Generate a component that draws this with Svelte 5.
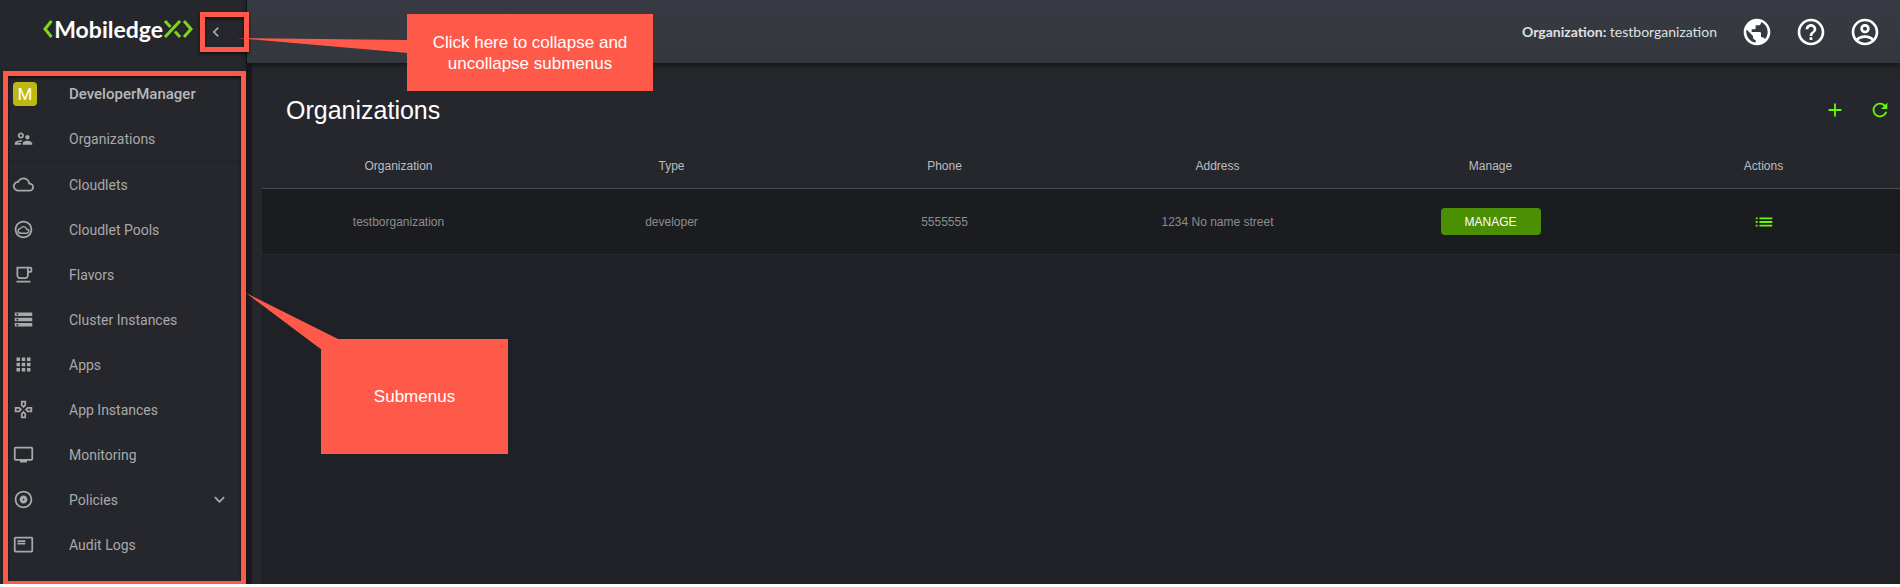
<script>
  const menu = [
    { label: 'Organizations', icon: 'people', divider: true },
    { label: 'Cloudlets', icon: 'cloud' },
    { label: 'Cloudlet Pools', icon: 'pool' },
    { label: 'Flavors', icon: 'cup' },
    { label: 'Cluster Instances', icon: 'storage' },
    { label: 'Apps', icon: 'apps' },
    { label: 'App Instances', icon: 'games' },
    { label: 'Monitoring', icon: 'monitor' },
    { label: 'Policies', icon: 'disc', expandable: true },
    { label: 'Audit Logs', icon: 'logs' }
  ];

  const icons = {
    people:
      'M9 12c1.930 0 3.500-1.570 3.500-3.500S10.930 5 9 5 5.500 6.570 5.500 8.500 7.070 12 9 12zm0-5c.830 0 1.500.670 1.500 1.500S9.830 10 9 10s-1.500-.670-1.500-1.500S8.170 7 9 7zm.050 10H4.770c.990-.500 2.700-1 4.230-1 .110 0 .230.010.340.010.340-.730.930-1.330 1.640-1.810-.730-.130-1.420-.200-1.980-.200-2.340 0-7 1.170-7 3.500V19h7v-1.500c0-.170.020-.340.050-.500zm7.450-2.500c-1.840 0-5.500 1.010-5.500 3V19h11v-1.500c0-1.990-3.660-3-5.500-3zm1.210-1.820c.760-.430 1.290-1.240 1.290-2.180C19 9.120 17.880 8 16.500 8S14 9.120 14 10.500c0 .940.530 1.750 1.290 2.180.360.200.770.320 1.210.320s.850-.120 1.210-.320z',
    cloud:
      'M19.350 10.040C18.670 6.590 15.640 4 12 4 9.110 4 6.600 5.640 5.350 8.040 2.340 8.360 0 10.910 0 14c0 3.310 2.690 6 6 6h13c2.760 0 5-2.240 5-5 0-2.640-2.050-4.780-4.650-4.960zM19 18H6c-2.210 0-4-1.790-4-4 0-2.050 1.530-3.760 3.560-3.970l1.070-.110.500-.950C8.080 7.140 9.940 6 12 6c2.620 0 4.880 1.860 5.390 4.430l.300 1.500 1.530.110c1.560.100 2.780 1.410 2.780 2.960 0 1.650-1.350 3-3 3z',
    pool:
      'M12 2C6.480 2 2 6.480 2 12s4.480 10 10 10 10-4.480 10-10S17.520 2 12 2zm0 18c-4.410 0-8-3.590-8-8s3.590-8 8-8 8 3.590 8 8-3.590 8-8 8zm3.920-9.010C15.460 9.250 13.880 8 12 8c-1.510 0-2.840.850-3.500 2.140C6.540 10.350 5 11.990 5 14c0 2.140 1.790 3 3.500 3h7.250C17.540 17 19 15.540 19 13.750c0-1.590-1.310-2.760-3.080-2.760zM15.750 15.500H9c-1.210 0-2.250-.860-2.250-2s.900-2 2-2h.540c.210-1.240 1.300-2.060 2.710-2.060 1.520 0 2.680 1.060 2.750 2.560v.500h1c.820 0 1.500.680 1.500 1.500 0 .500-.670 1.500-1.500 1.500z',
    cup:
      'M16 5v8c0 1.100-.900 2-2 2H8c-1.100 0-2-.900-2-2V5h10m4-2H4v10c0 2.210 1.790 4 4 4h6c2.210 0 4-1.790 4-4v-3h2c1.110 0 2-.890 2-2V5c0-1.110-.890-2-2-2zm-2 5V5h2v3h-2zm2 11H4v2h16v-2z',
    storage:
      'M2 20h20v-4H2v4zm2-3h2v2H4v-2zM2 4v4h20V4H2zm4 3H4V5h2v2zm-4 7h20v-4H2v4zm2-3h2v2H4v-2z',
    apps:
      'M4 8h4V4H4v4zm6 12h4v-4h-4v4zm-6 0h4v-4H4v4zm0-6h4v-4H4v4zm6 0h4v-4h-4v4zm6-10v4h4V4h-4zm-6 4h4V4h-4v4zm6 6h4v-4h-4v4zm0 6h4v-4h-4v4z',
    games:
      'M13 4v2.670l-1 1-1-1V4h2m7 7v2h-2.670l-1-1 1-1H20M6.670 11l1 1-1 1H4v-2h2.670M12 16.330l1 1V20h-2v-2.670l1-1M15 2H9v5.500l3 3 3-3V2zm7 7h-5.500l-3 3 3 3H22V9zM7.500 9H2v6h5.500l3-3-3-3zm4.500 4.500l-3 3V22h6v-5.500l-3-3z',
    monitor:
      'M21 3H3c-1.100 0-2 .900-2 2v12c0 1.100.900 2 2 2h5v2h8v-2h5c1.100 0 1.990-.900 1.990-2L23 5c0-1.100-.900-2-2-2zm0 14H3V5h18v12z',
    disc:
      'M12 2C6.480 2 2 6.480 2 12s4.480 10 10 10 10-4.480 10-10S17.520 2 12 2zm0 18c-4.410 0-8-3.590-8-8s3.590-8 8-8 8 3.590 8 8-3.590 8-8 8zm0-12.500c-2.490 0-4.500 2.010-4.500 4.500s2.010 4.500 4.500 4.500 4.500-2.010 4.500-4.500-2.010-4.500-4.500-4.500zm0 5.500c-.550 0-1-.450-1-1s.450-1 1-1 1 .450 1 1-.450 1-1 1z',
    logs:
      'M21 3H3c-1.100 0-2 .900-2 2v14c0 1.100.900 2 2 2h18c1.100 0 2-.900 2-2V5c0-1.100-.900-2-2-2zm0 16H3V5h18v14zM5 10h9v2H5v-2zm0-3h9v2H5V7z',
    left: 'M15.410 7.410L14 6l-6 6 6 6 1.410-1.410L10.830 12z',
    down: 'M16.590 8.590L12 13.170 7.410 8.590 6 10l6 6 6-6z',
    globe:
      'M12 2C6.480 2 2 6.480 2 12s4.480 10 10 10 10-4.480 10-10S17.520 2 12 2zm-1 17.930c-3.950-.490-7-3.850-7-7.930 0-.620.080-1.210.210-1.790L9 15v1c0 1.100.900 2 2 2v1.930zm6.900-2.540c-.260-.810-1-1.390-1.900-1.390h-1v-3c0-.550-.450-1-1-1H8v-2h2c.550 0 1-.450 1-1V7h2c1.100 0 2-.900 2-2v-.410c2.930 1.190 5 4.060 5 7.410 0 2.080-.800 3.970-2.100 5.390z',
    help:
      'M11 18h2v-2h-2v2zm1-16C6.480 2 2 6.480 2 12s4.480 10 10 10 10-4.480 10-10S17.520 2 12 2zm0 18c-4.410 0-8-3.590-8-8s3.590-8 8-8 8 3.590 8 8-3.590 8-8 8zm0-14c-2.210 0-4 1.790-4 4h2c0-1.100.900-2 2-2s2 .900 2 2c0 2-3 1.750-3 5h2c0-2.250 3-2.500 3-5 0-2.210-1.790-4-4-4z',
    account:
      'M12 2C6.480 2 2 6.480 2 12s4.480 10 10 10 10-4.480 10-10S17.520 2 12 2zM7.070 18.280c.430-.900 3.050-1.780 4.930-1.780s4.510.880 4.930 1.780C15.570 19.360 13.860 20 12 20s-3.570-.640-4.930-1.720zm11.290-1.450c-1.430-1.740-4.900-2.330-6.360-2.330s-4.930.590-6.360 2.330C4.620 15.490 4 13.820 4 12c0-4.410 3.590-8 8-8s8 3.590 8 8c0 1.820-.620 3.490-1.640 4.830zM12 6c-1.940 0-3.500 1.560-3.500 3.500S10.060 13 12 13s3.500-1.560 3.500-3.500S13.940 6 12 6zm0 5c-.830 0-1.500-.670-1.500-1.500S11.170 8 12 8s1.500.670 1.500 1.500S12.830 11 12 11z',
    add: 'M19 13h-6v6h-2v-6H5v-2h6V5h2v6h6v2z',
    refresh:
      'M17.650 6.350C16.200 4.900 14.210 4 12 4c-4.420 0-7.990 3.580-7.990 8s3.570 8 7.990 8c3.730 0 6.840-2.550 7.730-6h-2.080c-.820 2.330-3.040 4-5.650 4-3.310 0-6-2.690-6-6s2.690-6 6-6c1.660 0 3.140.690 4.220 1.780L13 11h7V4l-2.350 2.350z',
    list: 'M3 13h2v-2H3v2zm0 4h2v-2H3v2zm0-8h2V7H3v2zm4 4h14v-2H7v2zm0 4h14v-2H7v2zM7 7v2h14V7H7z'
  };

  const columns = ['Organization', 'Type', 'Phone', 'Address', 'Manage', 'Actions'];
  const rows = [
    { name: 'testborganization', type: 'developer', phone: '5555555', address: '1234 No name street' }
  ];
</script>

{#snippet icon(name)}
  <svg class="icon" viewBox="0 0 24 24" aria-hidden="true"><path d={icons[name]} /></svg>
{/snippet}

<div class="page">
  <aside class="sidebar">
    <div class="brand">
      <a class="logo" href="#home">
        <svg class="mark" width="11" height="18" viewBox="0 0 11 18" aria-hidden="true">
          <path d="M8.500 1 2 9l6.500 8" />
        </svg>
        <span>Mobiledge</span>
        <svg class="mark" width="30" height="18" viewBox="0 0 30 18" aria-hidden="true">
          <path d="M2 1l5.500 6M12 11.500l5 5.500M17 1 2 17M21 1l7 8-7 8" />
        </svg>
      </a>
      <button class="collapse" aria-label="Collapse menu">{@render icon('left')}</button>
    </div>
    <nav class="menu">
      <div class="item role">
        <span class="avatar">M</span>
        <span>DeveloperManager</span>
      </div>
      {#each menu as entry}
        <a class="item" class:divider={entry.divider} href="#{entry.icon}">
          {@render icon(entry.icon)}
          <span class="label">{entry.label}</span>
          {#if entry.expandable}{@render icon('down')}{/if}
        </a>
      {/each}
    </nav>
  </aside>

  <div class="content">
    <header class="topbar">
      <p class="org"><b>Organization:</b> testborganization</p>
      <button aria-label="Language">{@render icon('globe')}</button>
      <button aria-label="Help">{@render icon('help')}</button>
      <button aria-label="Account">{@render icon('account')}</button>
    </header>
    <main>
      <div class="heading">
        <h1>Organizations</h1>
        <button aria-label="Add">{@render icon('add')}</button>
        <button aria-label="Refresh">{@render icon('refresh')}</button>
      </div>
      <div class="panel">
        <table>
          <thead>
            <tr>
              {#each columns as column}<th scope="col">{column}</th>{/each}
            </tr>
          </thead>
          <tbody>
            {#each rows as row}
              <tr>
                <td>{row.name}</td>
                <td>{row.type}</td>
                <td>{row.phone}</td>
                <td>{row.address}</td>
                <td><button class="manage">MANAGE</button></td>
                <td><button class="actions" aria-label="Actions">{@render icon('list')}</button></td>
              </tr>
            {/each}
          </tbody>
        </table>
      </div>
    </main>
  </div>

  <svg class="pointers" width="520" height="360" viewBox="0 0 520 360" aria-hidden="true">
    <path d="M237 38 408 40v13zM246 293l94 47-18 10z" />
  </svg>
  <div class="callout toggle-note">Click here to collapse and uncollapse submenus</div>
  <div class="callout menu-note">Submenus</div>
</div>

<style>
  :global(body) {
    margin: 0;
    background: #fff;
  }
  .page {
    position: relative;
    display: flex;
    min-height: calc(100vh - 3px);
    background: #191a1d;
    font-family: Roboto, sans-serif;
  }
  button {
    display: inline-flex;
    align-items: center;
    justify-content: center;
    padding: 0;
    border: 0;
    background: none;
    color: inherit;
    font: inherit;
  }
  a {
    color: inherit;
    text-decoration: none;
  }
  .icon {
    display: block;
    flex: none;
    width: 22px;
    height: 22px;
    fill: currentColor;
  }
  .sidebar {
    display: flex;
    flex: none;
    flex-direction: column;
    width: 246px;
    background: #26272c;
    color: #a8a9ab;
  }
  .brand {
    display: flex;
    align-items: flex-start;
    justify-content: flex-end;
    gap: 7px;
    height: 59px;
    padding-top: 12px;
    margin-right: -3px;
  }
  .logo {
    display: flex;
    align-items: center;
    height: 34px;
    color: #fff;
    font: bold 23px/34px Lato, sans-serif;
  }
  .mark {
    fill: none;
    stroke: #7ed61c;
    stroke-width: 3;
  }
  .collapse {
    z-index: 2;
    box-sizing: border-box;
    justify-content: flex-start;
    width: 49px;
    height: 40px;
    padding-left: 1px;
    border: 5px solid #ff594a;
    box-shadow: 0 2px 3px #0009, inset 0 2px 3px #0009;
  }
  .collapse .icon {
    width: 20px;
    height: 20px;
  }
  .menu {
    position: relative;
    flex: 1;
    padding-bottom: 16px;
  }
  .menu::after {
    position: absolute;
    inset: 0 0 -2px 3px;
    border: 5px solid #ff594a;
    box-shadow: 0 1px 2px #0009, inset 0 2px 3px #0009;
    content: '';
    pointer-events: none;
  }
  .item {
    display: flex;
    align-items: center;
    height: 45px;
    padding: 0 16px 0 13px;
    font-size: 14px;
  }
  .item .icon {
    width: 21px;
    height: 21px;
  }
  .label {
    flex: 1;
    margin-left: 35px;
  }
  .divider {
    border-bottom: 1px solid #1f2024;
  }
  .role {
    gap: 32px;
    color: #b8b9bb;
    font-size: 15px;
    font-weight: 500;
  }
  .avatar {
    width: 24px;
    border-radius: 4px;
    background: #bdb912;
    color: #fff;
    font-size: 17px;
    font-weight: 400;
    line-height: 24px;
    text-align: center;
  }
  .content {
    display: flex;
    flex: 1;
    flex-direction: column;
    min-width: 0;
  }
  .topbar {
    z-index: 1;
    display: flex;
    align-items: center;
    justify-content: flex-end;
    gap: 22px;
    height: 63px;
    padding-right: 19px;
    margin-left: 1px;
    background: linear-gradient(#373a42, #34373d);
    box-shadow: 0 2px 6px #0008;
    color: #fff;
  }
  .topbar .icon {
    width: 32px;
    height: 32px;
  }
  .org {
    margin: 0 2px 0 0;
    color: #dfe0e1;
    font: 14px/20px Lato, sans-serif;
  }
  main {
    display: flex;
    flex: 1;
    flex-direction: column;
    padding-left: 10px;
    margin-left: 6px;
    background: #26272c;
    font-family: 'Liberation Sans', sans-serif;
  }
  .heading {
    box-sizing: border-box;
    display: flex;
    align-items: center;
    gap: 23px;
    height: 80px;
    padding: 14px 9px 0 24px;
    color: #68f804;
  }
  h1 {
    flex: 1;
    margin: 0;
    color: #fff;
    font-size: 25px;
    font-weight: 400;
  }
  .panel {
    flex: 1;
    background: #202126;
  }
  table {
    width: 100%;
    border-spacing: 0;
    table-layout: fixed;
    font-size: 12px;
    text-align: center;
  }
  th {
    height: 45px;
    padding: 0;
    border-bottom: 1px solid #4a4b50;
    background: #26272c;
    color: #bdbec0;
    font-weight: 400;
  }
  td {
    height: 65px;
    padding: 0;
    border-bottom: 1px solid #27282d;
    background: #1b1c20;
    color: #8b8c8f;
  }
  .manage {
    width: 100px;
    height: 27px;
    border-radius: 4px;
    background: #4b9003;
    color: #fff;
  }
  .actions {
    color: #68f804;
    vertical-align: middle;
  }
  .pointers {
    position: absolute;
    z-index: 3;
    top: 0;
    left: 0;
    fill: #ff594a;
    pointer-events: none;
  }
  .callout {
    position: absolute;
    z-index: 3;
    box-sizing: border-box;
    display: flex;
    align-items: center;
    justify-content: center;
    background: #ff594a;
    color: #fff;
    font: 17px/21px 'Liberation Sans', sans-serif;
    text-align: center;
  }
  .toggle-note {
    top: 14px;
    left: 407px;
    width: 246px;
    height: 77px;
    padding: 0 24px;
  }
  .menu-note {
    top: 339px;
    left: 321px;
    width: 187px;
    height: 115px;
  }
</style>
